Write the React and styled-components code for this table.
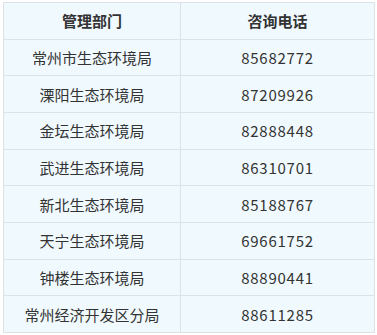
import React from "react";
import styled, { createGlobalStyle } from "styled-components";

const GlobalStyle = createGlobalStyle`
  html, body {
    margin: 0;
    padding: 0;
    background: #ffffff;
  }
  body {
    font-family: "Microsoft YaHei", "Noto Sans CJK SC", "Noto Sans", sans-serif;
  }
`;

const Wrap = styled.div`
  padding: 2px 3px 0 3px;
`;

const Table = styled.table`
  width: 372px;
  border-collapse: collapse;
  background: #f0f9fe;
  table-layout: fixed;
  color: #333333;
  font-size: 15px;
`;

const Row = styled.tr`
  height: 36.67px;
`;

const Cell = styled.td`
  border: 1px solid #dde2e7;
  text-align: center;
  vertical-align: middle;
  padding: 0;
  font-weight: ${(p) => (p.$head ? 700 : 400)};
  letter-spacing: ${(p) => (p.$num ? "0.75px" : "0")};
`;

const rows = [
  ["常州市生态环境局", "85682772"],
  ["溧阳生态环境局", "87209926"],
  ["金坛生态环境局", "82888448"],
  ["武进生态环境局", "86310701"],
  ["新北生态环境局", "85188767"],
  ["天宁生态环境局", "69661752"],
  ["钟楼生态环境局", "88890441"],
  ["常州经济开发区分局", "88611285"],
];

export default function App() {
  return (
    <>
      <GlobalStyle />
      <Wrap>
        <Table>
          <colgroup>
            <col style={{ width: 177 }} />
            <col />
          </colgroup>
          <tbody>
            <Row>
              <Cell $head>管理部门</Cell>
              <Cell $head>咨询电话</Cell>
            </Row>
            {rows.map(([name, tel]) => (
              <Row key={name}>
                <Cell>{name}</Cell>
                <Cell $num>{tel}</Cell>
              </Row>
            ))}
          </tbody>
        </Table>
      </Wrap>
    </>
  );
}
